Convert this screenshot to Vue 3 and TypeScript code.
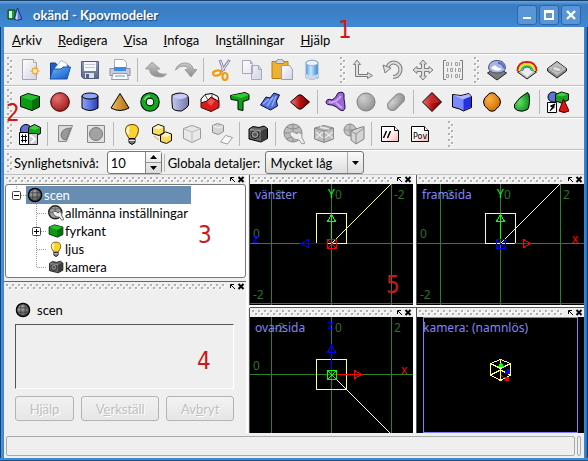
<script setup lang="ts">
import { ref } from 'vue'

type Label = [string, string, string]
interface Tool { icon: string; title: string; off?: boolean }

const menus: Label[] = [
  ['', 'A', 'rkiv'],
  ['', 'R', 'edigera'],
  ['', 'V', 'isa'],
  ['', 'I', 'nfoga'],
  ['In', 's', 'tällningar'],
  ['', 'H', 'jälp'],
]

const t = (icon: string, title: string, off = false): Tool => ({ icon, title, off })

/* rows -> toolbars -> groups of buttons */
const toolRows: Tool[][][][] = [
  [
    [
      [t('new', 'Ny'), t('open', 'Öppna'), t('save', 'Spara'), t('print', 'Skriv ut')],
      [t('undo', 'Ångra', true), t('redo', 'Gör om', true)],
      [t('cut', 'Klipp ut'), t('copy', 'Kopiera'), t('paste', 'Klistra in'), t('delete', 'Ta bort')],
    ],
    [[t('scale', 'Skala', true), t('rotate', 'Rotera', true), t('move', 'Flytta', true), t('matrix', 'Matris', true)]],
    [[t('skysphere', 'Himmelssfär'), t('rainbow', 'Regnbåge'), t('fog', 'Dimma')]],
  ],
  [
    [
      [
        t('box', 'Fyrkant'), t('sphere', 'Klot'), t('cylinder', 'Cylinder'), t('cone', 'Kon'), t('torus', 'Torus'),
        t('super', 'Superellipsoid'), t('lathe', 'Svarv'), t('prism', 'Prisma'), t('height', 'Höjdfält'), t('lens', 'Lins'),
      ],
      [t('blob', 'Blobb'), t('gsphere', 'Blobbklot', true), t('gcyl', 'Blobbcylinder', true)],
      [t('bicubic', 'Bikubisk yta'), t('mesh', 'Nät'), t('lathe2', 'Rotationsyta'), t('sweep', 'Svept klot')],
      [t('csg', 'Uppsättning')],
    ],
  ],
  [
    [
      [t('declare', 'Deklaration')],
      [t('clip', 'Klippt av', true), t('bound', 'Begränsat av', true)],
      [t('bulb', 'Ljus'), t('union', 'Ljusgrupp'), t('gcube', 'Fyrkant', true), t('project', 'Projicerad', true)],
      [t('camera', 'Kamera')],
      [t('gset', 'Inställningar', true), t('texture', 'Struktur', true), t('pattern', 'Mönster', true)],
      [t('comment', 'Kommentar'), t('pov', 'Povray')],
    ],
    [],
  ],
]

const children = [
  { icon: 'settings', text: 'allmänna inställningar', plus: false },
  { icon: 'box', text: 'fyrkant', plus: true },
  { icon: 'bulb', text: 'ljus', plus: false },
  { icon: 'camera', text: 'kamera', plus: false },
]

const buttons: Label[] = [['H', 'j', 'älp'], ['V', 'e', 'rkställ'], ['Av', 'b', 'ryt']]
const level = ref(10)
const detail = ref('Mycket låg')
const open = ref(true)
</script>

<template>
  <div class="window">
    <svg class="defs" aria-hidden="true">
      <defs>
        <radialGradient id="gRed" cx=".35" cy=".3" r=".8"><stop offset="0" stop-color="#e87070" /><stop offset="1" stop-color="#9c1414" /></radialGradient>
        <radialGradient id="gGray" cx=".35" cy=".3" r=".8"><stop offset="0" stop-color="#cfcfcf" /><stop offset="1" stop-color="#8e8e8e" /></radialGradient>
        <radialGradient id="gDark" cx=".35" cy=".3" r=".8"><stop offset="0" stop-color="#b0b0b0" /><stop offset="1" stop-color="#4c4c4c" /></radialGradient>
        <radialGradient id="gOrange" cx=".35" cy=".35" r=".75"><stop offset="0" stop-color="#ffb040" /><stop offset="1" stop-color="#c86a00" /></radialGradient>
        <radialGradient id="gGreen" cx=".35" cy=".5" r=".7"><stop offset="0" stop-color="#60e060" /><stop offset="1" stop-color="#0c8c1c" /></radialGradient>
        <linearGradient id="gBlue"><stop offset="0" stop-color="#90a4f8" /><stop offset=".5" stop-color="#5a74e4" /><stop offset="1" stop-color="#2c3ca4" /></linearGradient>
        <linearGradient id="gCone"><stop offset="0" stop-color="#f0bc60" /><stop offset="1" stop-color="#b06c10" /></linearGradient>
        <linearGradient id="gLav"><stop offset="0" stop-color="#c4c8f4" /><stop offset="1" stop-color="#7478a8" /></linearGradient>
        <linearGradient id="gWater"><stop offset="0" stop-color="#4c9ce8" /><stop offset=".4" stop-color="#c8e8ff" /><stop offset="1" stop-color="#3484d4" /></linearGradient>
        <linearGradient id="gDisk" x2="0" y2="1"><stop offset="0" stop-color="#8c9cbc" /><stop offset="1" stop-color="#5c6888" /></linearGradient>
        <linearGradient id="gFolder" x2="1" y2="1"><stop offset="0" stop-color="#6cb4ff" /><stop offset="1" stop-color="#1458c0" /></linearGradient>
        <linearGradient id="gPage" x2="1" y2="1"><stop offset="0" stop-color="#fff" /><stop offset="1" stop-color="#d4d4e4" /></linearGradient>
        <linearGradient id="gPink" x2="1" y2="1"><stop offset=".4" stop-color="#fff" /><stop offset="1" stop-color="#f8b8b0" /></linearGradient>
        <linearGradient id="gMetal" x2="0" y2="1"><stop offset="0" stop-color="#c8c8c8" /><stop offset="1" stop-color="#8c8c8c" /></linearGradient>
        <linearGradient id="gGem" x2="1"><stop offset="0" stop-color="#f08080" /><stop offset=".5" stop-color="#b81010" /><stop offset="1" stop-color="#780000" /></linearGradient>
      </defs>
      <symbol id="logo" viewBox="0 0 16 16">
        <path d="M1 3h7v9H1z" fill="#1c9c2c" stroke="#0c4c18" /><path d="M2 4h3v7H2z" fill="#d8f8d8" />
        <path d="M10.500 1L15 12q-4 2.500-8 0z" fill="#5c7cf0" stroke="#1c2c84" /><path d="M10.500 2L8.500 12l2 .7z" fill="#dce4ff" />
      </symbol>
      <symbol id="new" viewBox="0 0 22 22">
        <path d="M3.500.500h11l3 3v17h-14z" fill="url(#gPage)" stroke="#a4a4b4" /><path d="M14.500.500v3h3" fill="#fff" stroke="#a4a4b4" />
        <path d="M16 7l1 2.500 2.500-1L18.500 11l3 1-3 1 1 2.500-2.500-1-1 3-1-3-2.500 1 1-2.500-3-1 3-1-1-2.500 2.500 1z" fill="#f4a830" /><circle cx="16" cy="12" r="2" fill="#fff0b0" />
      </symbol>
      <symbol id="open" viewBox="0 0 22 22">
        <path d="M1.500 19.500V4h5l1.500 2h11v5" fill="#1c60c4" stroke="#0c3c94" /><path d="M4 12L12 1.500l6 3V14H4z" fill="#fff" stroke="#b0b8d0" />
        <path d="M1 20L4 10h8l2-2h7.500L18 20z" fill="url(#gFolder)" stroke="#1450ac" />
      </symbol>
      <symbol id="save" viewBox="0 0 22 22">
        <path d="M2.500 2.500h17v17h-15l-2-2z" fill="url(#gDisk)" stroke="#505c7c" /><path d="M5 3h12v9H5z" fill="#f4f6fa" /><path d="M6 5.500h10M6 8.500h10" stroke="#c0c8d8" />
        <path d="M6 14h9v5H6z" fill="#dce0ea" /><path d="M7 15h3v4H7z" fill="#56627e" />
      </symbol>
      <symbol id="print" viewBox="0 0 22 22">
        <path d="M5.500.500h9l3 3V10h-12z" fill="#fff" stroke="#a4acc0" /><path d="M1 9.500h20v7H1z" fill="#c8ccd6" stroke="#8c90a0" /><path d="M5 8h12v4H5z" fill="#3c8ce4" />
        <path d="M4 14.500h14l1.500 6H2.500z" fill="#f8fafc" stroke="#9498a8" /><path d="M6 17h10" stroke="#b0c8e8" stroke-width="2" />
      </symbol>
      <symbol id="undo" viewBox="0 0 22 22">
        <path d="M7 3L.500 10h4q0 8 11 8 4 0 6-3-9 1-10-5h3.500z" fill="url(#gMetal)" stroke="#a0a0a0" />
      </symbol>
      <symbol id="redo" viewBox="0 0 22 22">
        <path d="M16 18l6-7.500h-3.500Q17 3.500 9 4 2 5 .500 11 5 6.500 9 7q4 .5 4.500 3.500H10z" fill="url(#gMetal)" stroke="#a0a0a0" />
      </symbol>
      <symbol id="cut" viewBox="0 0 22 22">
        <path d="M9 1l4 11M18.500 1L10 13" stroke="#8c90a8" stroke-width="3" /><path d="M9.500 2l3 9M18 2l-7 10" stroke="#e8eaf4" />
        <ellipse cx="6" cy="14" rx="4" ry="2.500" transform="rotate(-15 6 14)" fill="none" stroke="#f09c10" stroke-width="2.200" /><ellipse cx="14" cy="17.500" rx="2.500" ry="3.500" fill="none" stroke="#f09c10" stroke-width="2.200" />
      </symbol>
      <symbol id="copy" viewBox="0 0 22 22">
        <path d="M1.500 1.500h8l2 3v10h-10zM10.500 6.500h7l3 4v10h-10z" fill="url(#gPage)" stroke="#a8a8c0" /><path d="M17.500 6.500v4h3M9.500 1.500v3h2" fill="none" stroke="#a8a8c0" />
      </symbol>
      <symbol id="paste" viewBox="0 0 22 22">
        <path d="M1 2.500h16v17H1z" fill="#f0b030" stroke="#b87c10" /><path d="M5 4.500V2q4-4 8 0v2.500z" fill="#d4d6de" stroke="#8c8c98" />
        <path d="M10.500 6.500h8l3 4v10h-11z" fill="url(#gPage)" stroke="#9c9cb4" />
      </symbol>
      <symbol id="delete" viewBox="0 0 22 22">
        <path d="M5 3q6-4 12 0v16q-6 3-12 0z" fill="url(#gWater)" stroke="#88a8cc" /><ellipse cx="11" cy="4" rx="6" ry="2.500" fill="#f0f6fc" stroke="#98b4d0" /><path d="M5 15q6 3 12 0v4q-6 3-12 0z" fill="#ccd8e4" />
        <path d="M15 17l4 2-4 1z" fill="#b8c4d0" />
      </symbol>
      <symbol id="scale" viewBox="0 0 22 22">
        <path d="M5 1L1.500 5.500h2v12h12v2l5-3-5-3v2h-9v-10h2z" fill="#e0e0e0" stroke="#7c7c7c" />
      </symbol>
      <symbol id="rotate" viewBox="0 0 22 22">
        <path d="M5 9Q8 2 14 4q6 3 4 9-2 5-7 5" fill="none" stroke="#7c7c7c" stroke-width="4" /><path d="M5 9Q8 2 14 4q6 3 4 9-2 5-7 5" fill="none" stroke="#dedede" stroke-width="2" />
        <path d="M1 6l2 8 6-5z" fill="#dedede" stroke="#7c7c7c" />
      </symbol>
      <symbol id="move" viewBox="0 0 22 22">
        <path d="M11 1L7.500 5h2v4.500H5v-2L1 11l4 3.500v-2h4.500V17h-2L11 21l3.500-4h-2v-4.500H17v2l4-3.500-4-3.500v2h-4.500V5h2z" fill="#dedede" stroke="#7c7c7c" />
      </symbol>
      <symbol id="matrix" viewBox="0 0 22 22">
        <path d="M4 1.500H1.500v19H4M18 1.500h2.500v19H18" fill="none" stroke="#7c7c7c" />
        <g fill="none" stroke="#a0a0a0">
          <path d="M4.500 3.500h2v3h-2zM13.500 3.500h2v3h-2zM8.500 9.500h2v3h-2zM16.500 9.500h2v3h-2zM4.500 15.500h2v3h-2zM13.500 15.500h2v3h-2z" />
          <path d="M9.500 3v4M17.500 3v4M5.500 9v4M13.500 9v4M9.500 15v4M17.500 15v4" />
        </g>
      </symbol>
      <symbol id="skysphere" viewBox="0 0 22 22">
        <path d="M1.500 14L11 8l9.500 6L11 21z" fill="#7c7c7c" stroke="#222" /><path d="M2.500 9Q3 1.500 11 1.500T19.500 9q-1 5-8.500 5T2.500 9z" fill="#a8b4e8" stroke="#444c70" />
        <path d="M5 9q4-5 6-1l5 2q-5 4-11-1z" fill="#fff" /><path d="M12 4q5 0 6 5" stroke="#5868c8" fill="none" stroke-width="2" />
      </symbol>
      <symbol id="rainbow" viewBox="0 0 22 22">
        <path d="M1.500 13L11 8l9.500 5L11 20z" fill="#bcbcbc" stroke="#222" /><path d="M5 13q0-5 6-5t6 5l-6 5z" fill="#ececec" />
        <path d="M1.500 12Q2 3 11 3t9.500 9" fill="none" stroke="#e01818" stroke-width="2" /><path d="M3.500 12Q4 5 11 5t7.500 7" fill="none" stroke="#f8e020" stroke-width="2" />
        <path d="M5 12Q6 7 11 7t6 5" fill="none" stroke="#20c040" stroke-width="1.500" /><path d="M6.500 12Q7 8 11 8t4.500 4" fill="none" stroke="#3858e0" />
      </symbol>
      <symbol id="fog" viewBox="0 0 22 22">
        <path d="M1.500 9.500L11 2.500l9.500 7v2.500L11 19l-9.500-7z" fill="#8c8c8c" stroke="#222" /><path d="M2 9.500L11 3l9 6.500-9 7z" fill="#bdbdbd" /><path d="M6 10q2-4 5-2t5 1q-2 5-6 3t-4-2z" fill="#e0e0e0" stroke="#888" stroke-width=".7" />
      </symbol>
      <symbol id="box" viewBox="0 0 22 22">
        <path d="M1.500 5.500L9 2.500l11.500 3v10.500L13 19.500l-11.500-4z" fill="#0c9c14" stroke="#000" /><path d="M2 6l11 3.500L20 6 9 3z" fill="#28c030" /><path d="M13 9.500L20 6v10l-7 3z" fill="#067008" />
      </symbol>
      <symbol id="sphere" viewBox="0 0 22 22"><circle cx="11" cy="11" r="9.300" fill="url(#gRed)" stroke="#300" /></symbol>
      <symbol id="cylinder" viewBox="0 0 22 22">
        <path d="M3 5v12q8 5 16 0V5z" fill="url(#gBlue)" stroke="#000" /><ellipse cx="11" cy="5" rx="8" ry="3" fill="#90a8fc" stroke="#000" />
      </symbol>
      <symbol id="cone" viewBox="0 0 22 22"><path d="M11 2.500L20 17q-9 5-18 0z" fill="url(#gCone)" stroke="#000" stroke-linejoin="round" /></symbol>
      <symbol id="torus" viewBox="0 0 22 22">
        <circle cx="11" cy="11" r="6.500" fill="none" stroke="#000" stroke-width="6.500" /><circle cx="11" cy="11" r="6.500" fill="none" stroke="#14a820" stroke-width="4.500" /><path d="M5.500 9Q7 5 11 5" fill="none" stroke="#70e070" stroke-width="1.500" />
      </symbol>
      <symbol id="super" viewBox="0 0 22 22">
        <path d="M3 4q8-4 15 0 2 1 1.500 10-1 3-7 6-8 0-9-3-1-8-.5-13z" fill="url(#gLav)" stroke="#000" /><path d="M4 6q4 2.500 8 2 4 0 7-3-7-5-15 1z" fill="#c8ccf4" /><path d="M12 8l1 10" stroke="#9498cc" stroke-width="2" />
      </symbol>
      <symbol id="lathe" viewBox="0 0 22 22">
        <path d="M2 8l4-4.500 7-1 6 3 1 5-9 4-9-3z" fill="#f4f4f4" stroke="#000" /><path d="M6 4l3 5M13 3v6" stroke="#555" /><path d="M2 12l6-2 4-4 8 4.500v6l-8 4-10-4z" fill="#d81c1c" stroke="#400" /><path d="M8 11l4-4 4 3-4 5z" fill="#f05050" />
      </symbol>
      <symbol id="prism" viewBox="0 0 22 22">
        <path d="M1.500 4.500L16 1.500l4 2v5l-6 2v9l-5-1V9.500l-7-1z" fill="#10a018" stroke="#000" /><path d="M2 4.500L16 2l4 2-8 3z" fill="#34c83c" />
      </symbol>
      <symbol id="height" viewBox="0 0 22 22">
        <path d="M1.500 14L7 6l4 1 4-5 5.500 2-3 6 1 5-7 4-3-1.500z" fill="#5470d8" stroke="#000c40" /><path d="M4 13l6-5M8 15l6-9M13 15l4-10" stroke="#98acfc" stroke-width="1.500" />
      </symbol>
      <symbol id="lens" viewBox="0 0 22 22">
        <path d="M1.500 11L9 4.500q2-1.500 4 0l7.500 6.500-7.500 6.500q-2 1.500-4 0z" fill="url(#gGem)" stroke="#000" />
      </symbol>
      <symbol id="blob" viewBox="0 0 22 22">
        <path d="M13 2q5-2 6 1v5q1 5 1 9-1 4-5 2-4-4-8-5-6 0-6-3 1-4 6-2 4-2 6-7z" fill="#9c68d8" stroke="#200c40" /><path d="M4 11q6 2 12-6M11 12l6 5" stroke="#cca8f8" stroke-width="2" fill="none" />
      </symbol>
      <symbol id="gsphere" viewBox="0 0 22 22"><circle cx="11" cy="11" r="9" fill="url(#gGray)" stroke="#7c7c7c" /></symbol>
      <symbol id="gcyl" viewBox="0 0 22 22"><rect x="1" y="6" width="20" height="10" rx="5" transform="rotate(-45 11 11)" fill="url(#gGray)" stroke="#8a8a8a" /></symbol>
      <symbol id="bicubic" viewBox="0 0 22 22"><path d="M11 1.500L20.500 11 11 20.500 1.500 11z" fill="url(#gGem)" stroke="#000" /><path d="M2.500 11L11 2.500l8.500 8.500-8.500 1.500z" fill="#d04444" opacity=".5" /></symbol>
      <symbol id="mesh" viewBox="0 0 22 22">
        <path d="M1.500 3.500L10 4.500l8-2 2.500 3v11l-8 3.500-4-2-7-2z" fill="#7c88ff" stroke="#000" /><path d="M2 4l8 1L18 3l2 2-8 3.500z" fill="#b0b8ff" /><path d="M12.500 8.500l7.500-3v10.500l-7.500 3.500z" fill="#2430e0" />
      </symbol>
      <symbol id="lathe2" viewBox="0 0 22 22"><path d="M8 2.500q3-1.500 6 0l1 1.500q4.500 2.500 4.500 7T15 18l-1 1.500q-3 1.500-6 0L7 18q-4.500-2.500-4.500-7T7 4z" fill="url(#gOrange)" stroke="#000" /></symbol>
      <symbol id="sweep" viewBox="0 0 22 22"><path d="M16.500 1.500q2 1 2 6 0 9-2 11-5 3-10 1-4.500-2-3-6Q8 6 16.500 1.500z" fill="url(#gGreen)" stroke="#000" /></symbol>
      <symbol id="csg" viewBox="0 0 22 22">
        <circle cx="6" cy="6" r="5" fill="#5c74d8" stroke="#000" /><path d="M8.500 3.500l6-2.500 7 2v6l-7 3-6-2z" fill="#18a020" stroke="#000" /><path d="M9 4l6 1.500L21 3.500l-6-2z" fill="#40d048" />
        <path d="M16.500 8L22 20q-5 3-10 0z" fill="#dc1414" stroke="#400" /><path d="M.500 11.500h9v10h-9z" fill="#fff" stroke="#000" /><path d="M8 13L3.500 15l2 1L3 20l4.500-4-1-.5z" fill="#000" stroke="#000" />
      </symbol>
      <symbol id="declare" viewBox="0 0 22 22">
        <circle cx="7" cy="7" r="5.500" fill="#5c74d8" stroke="#000" /><path d="M9.500 4.500l6-3 6 3v6l-6 3-6-3z" fill="#14a41c" stroke="#000" /><path d="M10 5l5.500 2L21 5l-5.500-3z" fill="#3cd044" />
        <path d="M9.500 10.500h9v11h-9z" fill="#c8c8d4" stroke="#222" /><path d="M11 12l5 4-4 4" fill="none" stroke="#fff" stroke-width="2" /><path d="M.500 9.500h9v12h-9z" fill="#fff" stroke="#000" /><path d="M3.500 11.500v8M6.500 11.500v8M2 13.500h6M2 17.500h6" stroke="#000" />
      </symbol>
      <symbol id="clip" viewBox="0 0 22 22"><path d="M3.500 2.500h14l-6 16h-8z" fill="#dadada" stroke="#888" /><path d="M16 5q-10 0-10 8 1 4 5 4z" fill="#999" stroke="#777" /></symbol>
      <symbol id="bound" viewBox="0 0 22 22"><path d="M2.500 2.500h17v17h-17z" fill="#e0e0e0" stroke="#888" /><circle cx="11" cy="11" r="6.500" fill="#a2a2a2" stroke="#777" /></symbol>
      <symbol id="bulb" viewBox="0 0 22 22">
        <path d="M11 1.500q6.500 0 6.500 6 0 3-3.500 8H8q-3.500-5-3.500-8 0-6 6.500-6z" fill="#fcd030" stroke="#5c4400" /><path d="M8 4q-3 4 0 7" stroke="#fff8c0" stroke-width="2.500" fill="none" /><path d="M8 15.500h6v4l-3 2-3-2z" fill="#777" stroke="#000" /><path d="M8 17.500h6" stroke="#ddd" />
      </symbol>
      <symbol id="union" viewBox="0 0 22 22">
        <path d="M1.500 4.500L7 1.500l6 2v6l-5 3-6.500-2z" fill="#f8dc60" stroke="#000" /><path d="M2 5l6 1.500L12.500 4 7 2z" fill="#fff4b0" />
        <path d="M9.500 12.500L14.500 9l6 2v6.500l-5 3-6-2z" fill="#f8dc60" stroke="#000" /><path d="M10 13l5.500 1.500 4.500-3-5.500-2z" fill="#fff4b0" /><path d="M3 13l5 4" stroke="#d8a820" />
      </symbol>
      <symbol id="gcube" viewBox="0 0 22 22"><path d="M2.500 5.500L11 2.500l8.500 3v10L11 19.500l-8.500-4z" fill="#e8e8e8" stroke="#9c9c9c" /><path d="M3 6l8 3 8-3M11 9v10" fill="none" stroke="#bbb" /></symbol>
      <symbol id="project" viewBox="0 0 22 22">
        <path d="M1.500 2.500l5-2 6 2v6l-5 3-6-2z" fill="#d4d4d4" stroke="#8c8c8c" /><path d="M2 3l5.500 2L12 3" fill="none" stroke="#f4f4f4" /><path d="M14.500 12.500l7 2-5 6.500-7-2z" fill="#fafafa" stroke="#9c9c9c" />
      </symbol>
      <symbol id="camera" viewBox="0 0 22 22">
        <path d="M2 6l4-2.500 6 1L17 3l3.500 2.500v10L14 19l-12-3z" fill="#666" stroke="#000" /><path d="M14 8l6-3v10.500L14 19z" fill="#3c3c3c" /><circle cx="8" cy="11.500" r="4" fill="#999" stroke="#111" /><circle cx="8" cy="11.500" r="2" fill="#555" /><path d="M3 6.500l11 1.500" stroke="#aaa" />
      </symbol>
      <symbol id="gset" viewBox="0 0 22 22">
        <circle cx="10" cy="10" r="9" fill="#bcbcbc" stroke="#888" /><path d="M1 10h18M10 1v18M3.500 4q6 4 13 0M3.500 16q6-4 13 0" fill="none" stroke="#8c8c8c" /><path d="M7 12q-1-4 4-3l3 2 2-2q4 2 3 6l3 5-3 1-3-4-5-1z" fill="#ececec" stroke="#999" />
      </symbol>
      <symbol id="settings" viewBox="0 0 22 22">
        <circle cx="10" cy="10" r="9" fill="#9c9c9c" stroke="#222" stroke-width="2" /><path d="M1 10h18M10 1v18M3.500 4q6 4 13 0" fill="none" stroke="#555" /><path d="M7 12q-1-4 4-3l3 2 2-2q4 2 3 6l3 5-3 1-3-4-5-1z" fill="#eee" stroke="#444" />
      </symbol>
      <symbol id="globe" viewBox="0 0 22 22">
        <circle cx="11" cy="11" r="9" fill="url(#gDark)" stroke="#000" stroke-width="2" /><path d="M3 8h16M3 14h16M8 3v16M14 3v16" stroke="#333" />
      </symbol>
      <symbol id="texture" viewBox="0 0 22 22">
        <path d="M1.500 5L11 2.500 20.500 5v11L11 19.500 1.500 16z" fill="#bbb" stroke="#888" /><path d="M2 5l9 3 9-3M11 8v11" fill="none" stroke="#888" /><path d="M3 9l7 6M10 9l-7 6M12 15l8-6M12 9l8 6M7 4l9 2" stroke="#e8e8e8" stroke-width="1.500" />
      </symbol>
      <symbol id="pattern" viewBox="0 0 22 22">
        <circle cx="7" cy="7" r="6" fill="#c0c0c0" stroke="#888" /><path d="M1 7h12M7 1v12" stroke="#999" /><path d="M8 8l6-2.500 7-2V16l-8 5-5-4z" fill="#d4d4d4" stroke="#808080" /><path d="M8 8l5 3 8-6M13 11v10" stroke="#909090" fill="none" />
      </symbol>
      <symbol id="comment" viewBox="0 0 22 22">
        <path d="M2.500 3.500h13l4 4v11h-17z" fill="url(#gPink)" stroke="#000" /><path d="M15.500 3.500v4h4" fill="#fff" stroke="#000" /><path d="M7.500 8l-3 7M11.500 8l-3 7" stroke="#000" stroke-width="1.500" />
      </symbol>
      <symbol id="pov" viewBox="0 0 22 22">
        <path d="M2.500 3.500h13l4 4v11h-17z" fill="url(#gPink)" stroke="#000" /><path d="M15.500 3.500v4h4" fill="#fff" stroke="#000" /><text x="4" y="16" class="pov">Pov</text>
      </symbol>
    </svg>

    <header class="title">
      <svg class="i16"><use href="#logo" /></svg>
      <h1>okänd - Kpovmodeler</h1>
      <button aria-label="Minimera"><svg viewBox="0 0 18 18"><path d="M5 12h8" stroke="#fff" stroke-width="2" /></svg></button>
      <button aria-label="Maximera"><svg viewBox="0 0 18 18"><path d="M4 4h10v10H4zM6 7v5h6V7z" fill="#fff" fill-rule="evenodd" /></svg></button>
      <button aria-label="Stäng"><svg viewBox="0 0 18 18"><path d="M5 5l8 8M13 5l-8 8" stroke="#fff" stroke-width="2.400" /></svg></button>
    </header>

    <nav class="menu">
      <button v-for="m in menus" :key="m.join('')">{{ m[0] }}<u>{{ m[1] }}</u>{{ m[2] }}</button>
    </nav>

    <div v-for="(row, r) in toolRows" :key="r" class="tools">
      <div v-for="(bar, b) in row" :key="b" class="bar">
        <span class="vgrip" />
        <div v-for="(group, g) in bar" :key="g" class="group">
          <button v-for="tool in group" :key="tool.icon" :title="tool.title" :aria-label="tool.title" :disabled="tool.off">
            <svg class="i22"><use :href="'#' + tool.icon" /></svg>
          </button>
        </div>
      </div>
    </div>

    <div class="tools options">
      <span class="vgrip" />
      <label for="level">Synlighetsnivå:</label>
      <span class="spin">
        <input id="level" v-model="level" type="text" inputmode="numeric">
        <span class="steps">
          <button aria-label="Öka" @click="level++"><svg viewBox="0 0 14 10"><path d="M4 7h7L7.500 3z" /></svg></button>
          <button aria-label="Minska" @click="level--"><svg viewBox="0 0 14 10"><path d="M4 3h7L7.500 7z" /></svg></button>
        </span>
      </span>
      <span class="rule" />
      <label for="detail">Globala detaljer:</label>
      <span class="combo">
        <select id="detail" v-model="detail"><option>Mycket låg</option><option>Låg</option><option>Medium</option><option>Hög</option></select>
        <svg viewBox="0 0 16 21"><path d="M.500 0v21" stroke="#aaa" /><path d="M5 9h7l-3.500 4z" /></svg>
      </span>
    </div>

    <main>
      <div class="left">
        <section class="dock scene">
          <div class="head"><span class="hgrip" /><svg viewBox="0 0 16 9"><path d="M1.500 6V2.500H5M2 3l4 4" class="k" /><path d="M9.500 2l5 5M14.500 2l-5 5" class="kk" /></svg></div>
          <ul class="tree">
            <li>
              <div class="node">
                <button class="root" :aria-expanded="open" aria-label="Fäll ihop scen" @click="open = !open">
                  <svg viewBox="0 0 20 18"><path d="M10.500 0v4M15 9.500h5" class="dots" /><rect x="6.500" y="5.500" width="8" height="8" rx="1" class="sq" /><path :d="open ? 'M8 9.500h5' : 'M8 9.500h5M10.500 7v5'" class="sign" /></svg>
                </button>
                <span class="name selected"><svg class="i16"><use href="#globe" /></svg>scen</span>
              </div>
              <ul v-if="open">
                <li v-for="(c, i) in children" :key="c.text" class="node">
                  <component :is="c.plus ? 'button' : 'span'" class="branch" :aria-label="c.plus ? 'Fäll ut ' + c.text : undefined">
                    <svg viewBox="0 0 18 18">
                      <path :d="i < children.length - 1 ? 'M6.500 0v18M7 9.500h9' : 'M6.500 0v9.500h9.500'" class="dots" />
                      <g v-if="c.plus"><rect x="2.500" y="5.500" width="8" height="8" rx="1" class="sq" /><path d="M4 9.500h5M6.500 7v5" class="sign" /></g>
                    </svg>
                  </component>
                  <svg class="i16"><use :href="'#' + c.icon" /></svg><span>{{ c.text }}</span>
                </li>
              </ul>
            </li>
          </ul>
        </section>
        <section class="dock props">
          <div class="head"><span class="hgrip" /><svg viewBox="0 0 16 9"><path d="M1.500 6V2.500H5M2 3l4 4" class="k" /><path d="M9.500 2l5 5M14.500 2l-5 5" class="kk" /></svg></div>
          <form class="form" @submit.prevent>
            <h2><svg class="i16"><use href="#globe" /></svg>scen</h2>
            <div class="sunk" />
            <div class="actions">
              <button v-for="b in buttons" :key="b.join('')" disabled>{{ b[0] }}<u>{{ b[1] }}</u>{{ b[2] }}</button>
            </div>
          </form>
        </section>
      </div>

      <div class="views">
        <section class="dock">
          <div class="head"><span class="hgrip" /><svg viewBox="0 0 16 9"><path d="M1.500 6V2.500H5M2 3l4 4" class="k" /><path d="M9.500 2l5 5M14.500 2l-5 5" class="kk" /></svg></div>
          <svg class="canvas" role="img" aria-label="vänster">
            <path d="M21.500 0v400M81.500 0v400M141.500 0v400M0 59.500h600M0 119.500h600" class="grid" />
            <g class="num"><text x="25" y="15">2</text><text x="85" y="15">0</text><text x="144" y="15">-2</text><text x="3" y="54">0</text><text x="3" y="115">-2</text></g>
            <text x="5" y="15" class="cap">vänster</text>
            <rect x="66.500" y="29.500" width="30" height="30" class="yl" /><path d="M81.500 59.500L141 0" class="yl" />
            <path d="M81.500 55V30M77.500 37.500h8L81.500 30z" class="g" /><path d="M77 59.500H51M58.500 55.500v8L51 59.500z" class="b" />
            <path d="M77.500 55.500h9v9h-9zl9 9M86.500 55.500l-9 9" class="r" />
            <text x="78" y="14" class="gt">Y</text><text x="3" y="59" class="bt">z</text>
          </svg>
        </section>
        <section class="dock">
          <div class="head"><span class="hgrip" /><svg viewBox="0 0 16 9"><path d="M1.500 6V2.500H5M2 3l4 4" class="k" /><path d="M9.500 2l5 5M14.500 2l-5 5" class="kk" /></svg></div>
          <svg class="canvas" role="img" aria-label="framsida">
            <path d="M23.500 0v400M83.500 0v400M143.500 0v400M0 59.500h600M0 119.500h600" class="grid" />
            <g class="num"><text x="26" y="15">-2</text><text x="87" y="15">0</text><text x="146" y="15">2</text><text x="3" y="54">0</text><text x="3" y="115">-2</text></g>
            <text x="5" y="15" class="cap">framsida</text>
            <rect x="68.500" y="29.500" width="30" height="30" class="yl" /><path d="M83.500 59.500L143 0" class="yl" />
            <path d="M83.500 55V30M79.500 37.500h8L83.500 30z" class="g" /><path d="M98 59.500H114M106.500 55.500v8L114 59.500z" class="r" />
            <path d="M79.500 55.500h9v9h-9zl9 9M88.500 55.500l-9 9" class="b" />
            <text x="80" y="14" class="gt">Y</text><text x="155" y="59" class="rt">x</text>
          </svg>
        </section>
        <section class="dock">
          <div class="head"><span class="hgrip" /><svg viewBox="0 0 16 9"><path d="M1.500 6V2.500H5M2 3l4 4" class="k" /><path d="M9.500 2l5 5M14.500 2l-5 5" class="kk" /></svg></div>
          <svg class="canvas" role="img" aria-label="ovansida">
            <path d="M21.500 0v400M81.500 0v400M141.500 0v400M0 57.500h600" class="grid" />
            <g class="num"><text x="24" y="15">-2</text><text x="85" y="15">0</text><text x="144" y="15">2</text><text x="3" y="53">0</text></g>
            <text x="5" y="15" class="cap">ovansida</text>
            <rect x="66.500" y="42.500" width="30" height="30" class="yl" /><path d="M81.500 57.500l60 60" class="yl" />
            <path d="M81.500 53V28M77.500 35.500h8L81.500 28z" class="b" /><path d="M86 57.500H112M104.500 53.500v8L112 57.500z" class="r" />
            <path d="M77.500 53.500h9v9h-9zl9 9M86.500 53.500l-9 9" class="g" />
            <text x="78" y="12" class="bt">z</text><text x="151" y="57" class="rt">x</text>
          </svg>
        </section>
        <section class="dock">
          <div class="head"><span class="hgrip" /><svg viewBox="0 0 16 9"><path d="M1.500 6V2.500H5M2 3l4 4" class="k" /><path d="M9.500 2l5 5M14.500 2l-5 5" class="kk" /></svg></div>
          <svg class="canvas" role="img" aria-label="kamera: (namnlös)">
            <text x="6" y="15" class="cap">kamera: (namnlös)</text>
            <rect x="6.500" y=".5" width="154" height="115" class="frame" />
            <path d="M83.500 42.500l10 4v11.500l-10 5.500-10-5.500V46.500zM73.500 46.500l10 5 10-5M83.500 51.500v12M83.500 42.500v10M73.500 58l10-5 10 5" class="yl" />
            <path d="M83 46h2l2 4h-6z" fill="#0f0" /><path d="M88 54h2v-2h3v5h-5z" fill="#00f" /><path d="M84 58l3 2h5v4h-4v-3l-4-2z" fill="#f00" />
          </svg>
        </section>
      </div>
    </main>

    <footer class="status"><span class="msg" /><span class="end" /></footer>

    <span class="mark m1">1</span>
    <span class="mark m2">2</span>
    <span class="mark m3">3</span>
    <span class="mark m4">4</span>
    <span class="mark m5">5</span>
  </div>
</template>

<style>
body { margin: 0; background: #efefef; }
</style>

<style scoped>
* { box-sizing: border-box; }
.window {
  position: relative;
  display: flex;
  flex-direction: column;
  min-height: 100vh;
  padding: 0 4px 3px;
  background: linear-gradient(0deg, #1c4c80 1px, #3f8ad8 1px, #3f8ad8 3px, transparent 3px),
    linear-gradient(90deg, #17406c 1px, #4a97e0 1px, #3a82d0 4px, #efefef 4px, #efefef calc(100% - 4px), #3f8ad8 calc(100% - 4px), #2a6cb4 calc(100% - 1px), #17406c 0);
  color: #000;
  font: 13px/18px Lato, "Noto Sans", sans-serif;
}
button, input, select { font: inherit; color: inherit; margin: 0; padding: 0; border: 0; background: none; }
svg { display: block; }
.defs { position: absolute; width: 0; height: 0; }
.i16 { width: 16px; height: 16px; flex: none; }
.i22 { width: 22px; height: 22px; }
.pov { font: 8px "DejaVu Sans", sans-serif; }

.title {
  display: flex;
  align-items: center;
  gap: 2px;
  height: 27px;
  margin: 0 -4px;
  padding: 2px 7px 0;
  background: linear-gradient(#17406c 1px, #68a6e4 1px, #3a7cc0 5px, #3f88d4 100%);
}
.title h1 { flex: 1; margin: 0 8px; color: #fff; font: bold 13px/18px Lato, sans-serif; text-shadow: 1px 1px 1px #1c4474; }
.title button { width: 20px; height: 20px; border: 1px solid #2c66a8; border-radius: 3px; background: #5896d8; }

.menu { display: flex; height: 27px; border-bottom: 1px solid #bebebe; }
.menu button { padding: 0 8px; }

.tools { display: flex; height: 32px; border-top: 1px solid #fff; border-bottom: 1px solid #c0c0c0; }
.bar { display: flex; }
.bar + .bar { margin-left: 3px; }
.bar:nth-child(2) { margin-left: 10px; }
.vgrip, .hgrip {
  background: conic-gradient(from 0deg at 2px 2px, transparent 75%, #b0b0b0 0) 0 0 / 6px 6px,
    conic-gradient(from 0deg at 2px 2px, transparent 75%, #b0b0b0 0) 3px 3px / 6px 6px,
    conic-gradient(from 0deg at 2px 2px, transparent 75%, #fff 0) 1px 1px / 6px 6px,
    conic-gradient(from 0deg at 2px 2px, transparent 75%, #fff 0) 4px 4px / 6px 6px;
}
.vgrip { flex: none; width: 6px; margin: 2px 2px 2px 3px; }
.hgrip { flex: 1; height: 6px; }
.group { display: flex; align-items: center; }
.group + .group::before { content: ""; width: 1px; height: 24px; margin: 0 3px 0 2px; background: #b8b8b8; }
.group button { display: grid; place-items: center; width: 30px; height: 28px; }

.options { height: 25px; align-items: center; }
.options .vgrip { align-self: stretch; }
.options label { white-space: nowrap; }
.options .vgrip + label { margin-left: -1px; }
.spin, .combo { display: flex; height: 23px; border: 1px solid #777; border-radius: 3px; background: #fff; }
.spin { width: 55px; margin-left: 8px; }
.spin input { flex: 1; width: 0; padding-left: 3px; outline: 0; }
.steps { display: flex; flex-direction: column; width: 16px; border-left: 1px solid #888; background: linear-gradient(#fafafa, #dcdcdc); }
.steps button { flex: 1; min-height: 0; }
.steps button + button { border-top: 1px solid #999; }
.steps svg { width: 14px; height: 10px; }
.rule { width: 1px; height: 18px; margin: 0 3px 0 2px; background: #b8b8b8; }
.combo { width: 99px; margin-left: 5px; background: linear-gradient(#fafafa, #dedede); }
.combo select { flex: 1; min-width: 0; padding-left: 4px; appearance: none; outline: 0; }
.combo svg { width: 16px; height: 21px; }

main { flex: 1; display: flex; gap: 4px; }
.left { flex: 242; min-width: 0; display: flex; flex-direction: column; box-shadow: 2px 0 #fff; }
.views {
  flex: 334;
  min-width: 0;
  display: grid;
  grid-template-columns: 163fr 167fr;
  grid-template-rows: 130px minmax(125px, 1fr);
  gap: 3px 4px;
  background: linear-gradient(#fff 2px, #555 2px) 0 130px / 100% 3px no-repeat #fff;
}
.dock { display: flex; flex-direction: column; min-width: 0; min-height: 0; }
.views .dock { box-shadow: -1px 0 #555; }
.head { flex: none; display: flex; align-items: center; gap: 4px; height: 9px; padding: 0 1px 0 2px; background: #efefef; }
.head svg { width: 16px; height: 9px; }
.k { fill: none; stroke: #000; }
.kk { stroke: #000; stroke-width: 2; }

ul { margin: 0; padding: 0; list-style: none; }
.tree { height: 94px; margin-left: 1px; padding: 1px; border: 1px solid #777; border-radius: 3px; background: #fff; }
.scene { height: 107px; border-bottom: 1px solid #666; }
.node { display: flex; align-items: center; height: 18px; }
.node > .i16 { margin-right: 1px; }
.tree ul { padding-left: 23px; }
.branch, .branch svg { display: block; width: 18px; height: 18px; }
.root, .root svg { display: block; width: 20px; height: 18px; }
.root { margin-left: -1px; }
.dots { fill: none; stroke: #999; stroke-dasharray: 1 1; }
.sq { fill: #fff; stroke: #444; }
.sign { stroke: #000; }
.name { display: flex; align-items: center; gap: 1px; width: 165px; height: 18px; padding-left: 1px; }
.selected { background: #678db2; color: #fff; }

.props { flex: 1; }
.form { flex: 1; display: flex; flex-direction: column; padding: 9px 12px 12px 11px; }
h2 { display: flex; align-items: center; gap: 6px; margin: 0 0 4px; font-size: 13px; font-weight: normal; line-height: 20px; }
.sunk { flex: 1; border: 1px solid; border-color: #555 #fff #fff #555; }
.actions { display: flex; gap: 7px; margin-top: 7px; }
.actions button {
  flex: 1 1 auto;
  padding: 0 12px;
  height: 25px;
  border: 1px solid #b4b4b4;
  border-radius: 3px;
  background: linear-gradient(#f2f2f2, #e6e6e6);
  color: #c0c0c0;
  text-shadow: 1px 1px #fff;
}

.canvas { flex: 1 1 0; width: 100%; height: 0; min-height: 0; background: #000; font: 12px "Noto Sans", sans-serif; shape-rendering: crispEdges; }
.grid { stroke: #2c802c; }
.num { fill: #2c702c; }
.cap { fill: #8484fc; }
.yl { fill: none; stroke: #ffff80; }
.frame { fill: none; stroke: #8080ff; }
.g { fill: none; stroke: #0f0; }
.b { fill: none; stroke: #00f; }
.r { fill: none; stroke: #f00; }
.gt { fill: #0f0; }
.bt { fill: #00f; }
.rt { fill: #f00; }

.status { display: flex; gap: 2px; height: 25px; padding: 3px 3px 2px 2px; }
.msg { flex: 1; border: 1px solid #aaa; border-radius: 2px; }
.end { width: 4px; border: 1px solid #aaa; border-radius: 2px; }

.mark { position: absolute; color: #cc1818; font: 24px/24px "DejaVu Sans Condensed", "DejaVu Sans", sans-serif; pointer-events: none; }
.m1 { left: 338px; top: 18px; }
.m2 { left: 6px; top: 101px; }
.m3 { left: 198px; top: 223px; }
.m4 { left: 197px; top: 349px; }
.m5 { left: 386px; top: 273px; }
</style>
